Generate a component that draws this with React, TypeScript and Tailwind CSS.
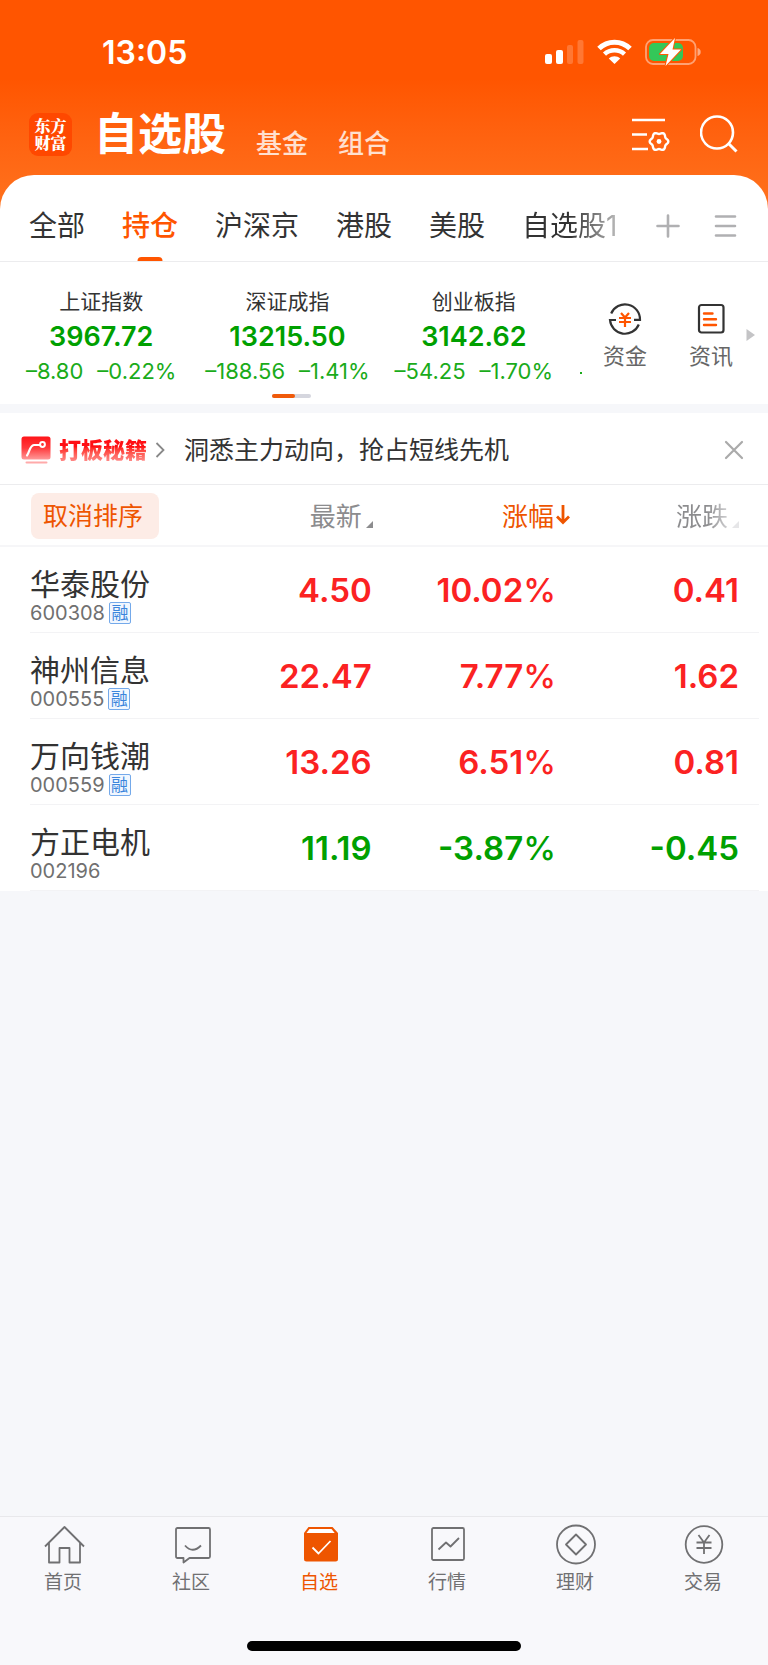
import React from "react";

const tabs = ["全部", "持仓", "沪深京", "港股", "美股"];

const indices = [
  { name: "上证指数", value: "3967.72", change: "–8.80", rate: "–0.22%" },
  { name: "深证成指", value: "13215.50", change: "–188.56", rate: "–1.41%" },
  { name: "创业板指", value: "3142.62", change: "–54.25", rate: "–1.70%" },
];

const stocks = [
  { name: "华泰股份", code: "600308", margin: true, price: "4.50", rate: "10.02", change: "0.41" },
  { name: "神州信息", code: "000555", margin: true, price: "22.47", rate: "7.77", change: "1.62" },
  { name: "万向钱潮", code: "000559", margin: true, price: "13.26", rate: "6.51", change: "0.81" },
  { name: "方正电机", code: "002196", margin: false, price: "11.19", rate: "-3.87", change: "-0.45" },
];

// six-lobed gear outline for the list settings icon
const gear = Array.from({ length: 72 }, (_, i) => {
  const a = (i * Math.PI) / 36;
  const r = 8.4 + 0.9 * Math.cos(6 * a);
  return `${(27 + r * Math.cos(a)).toFixed(2)},${(26.5 + r * Math.sin(a)).toFixed(2)}`;
}).join(" ");

const StatusBar = () => (
  <div className="flex h-[104px] items-center justify-between pl-[102px] pr-[67px]">
    <span className="pt-[2px] text-[32px] leading-8 font-semibold">13:05</span>
    <div className="flex items-center gap-[13px]">
      <svg width="39" height="26" viewBox="0 0 39 26" fill="#fff">
        <rect x="0" y="15" width="7" height="10" rx="2" />
        <rect x="11" y="11" width="7" height="14" rx="2" />
        <rect x="22" y="6" width="6" height="19" rx="2" opacity=".2" />
        <rect x="32.500" y="1" width="6" height="24" rx="2" opacity=".2" />
      </svg>
      <svg width="35" height="26" viewBox="0 0 35 26" fill="none" stroke="#fff">
        <path d="M2 9.500C10.500 1 24.500 1 33 9.500" strokeWidth="5" />
        <path d="M7.500 15.200C13 10 22 10 27.500 15.200" strokeWidth="4.500" />
        <path d="M11.800 19.500C15 16.600 20 16.600 23.200 19.500L17.500 25Z" fill="#fff" stroke="none" />
      </svg>
      <svg width="56" height="28" viewBox="0 0 56 28">
        <rect x="1" y="2" width="49.500" height="24" rx="7" fill="none" stroke="#fff" strokeOpacity=".45" strokeWidth="1.800" />
        <path d="M52.500 10v8c2-.5 3.200-2 3.200-4s-1.200-3.500-3.200-4z" fill="#fff" fillOpacity=".5" />
        <rect x="4" y="5" width="34" height="18" rx="5" fill="#34c759" />
        <path
          d="M30 0 15 16h8.500L20.500 28 36 11.500h-8.500z"
          fill="#fff"
          stroke="#ff5a03"
          strokeWidth="2"
          paintOrder="stroke"
          strokeLinejoin="round"
        />
      </svg>
    </div>
  </div>
);

const Header = () => (
  <header className="flex h-[60px] items-center justify-between pl-[29px] pr-[30px]">
    <div className="flex items-center">
      <div className="mr-[22px] flex size-[43px] items-center justify-center rounded-[9px] bg-[#ff4800] font-['Noto_Serif_CJK_SC','Noto_Sans_CJK_SC',serif] text-[16px] leading-[17px] font-black">
        <span className="w-8 break-all">东方财富</span>
      </div>
      <nav className="flex items-end">
        <a href="#watch" className="text-[44px] leading-[60px] font-bold">
          自选股
        </a>
        <a href="#fund" className="mb-[2px] ml-[30px] text-[26px] leading-9 font-medium text-white/80">
          基金
        </a>
        <a href="#group" className="mb-[2px] ml-[30px] text-[26px] leading-9 font-medium text-white/80">
          组合
        </a>
      </nav>
    </div>
    <div className="flex items-center gap-[30px]">
      <button aria-label="列表设置">
        <svg width="38" height="38" viewBox="0 0 38 38" fill="none" stroke="#fff" strokeWidth="2.600">
          <path d="M0 5h33M0 19.500h15M0 34h16" />
          <polygon points={gear} strokeLinejoin="round" strokeWidth="2.400" />
          <circle cx="27" cy="26.500" r="2.400" fill="#fff" stroke="none" />
        </svg>
      </button>
      <button aria-label="搜索">
        <svg width="38" height="38" viewBox="0 0 38 38" fill="none" stroke="#fff" strokeWidth="2.600">
          <circle cx="17" cy="17.500" r="16" />
          <path d="m28.500 28.500 8 8" strokeWidth="3" />
        </svg>
      </button>
    </div>
  </header>
);

const Tabs = () => (
  <div className="flex h-[87px] items-center justify-between border-b border-[#ececee] pr-[31px] pl-[29px]">
    <div className="flex h-full gap-[37px] text-[28px] leading-10 text-[#333]">
      {tabs.map((tab) =>
        tab === "持仓" ? (
          <button key={tab} className="relative h-full pt-4 font-medium text-[#ff5500]">
            {tab}
            <span className="absolute bottom-0 left-1/2 h-1 w-[25px] -translate-x-1/2 rounded-t-sm bg-[#ff5500]" />
          </button>
        ) : (
          <button key={tab} className="h-full pt-4">
            {tab}
          </button>
        )
      )}
      <button className="h-full bg-linear-to-r from-[#333] from-50% to-[#bbb] bg-clip-text pt-4 text-transparent">
        自选股1
      </button>
    </div>
    <div className="flex items-center gap-[34px] pt-4">
      <button aria-label="添加分组">
        <svg width="24" height="24" viewBox="0 0 24 24" stroke="#b0b0b2" strokeWidth="2.600" strokeLinecap="round">
          <path d="M12 1.500v21M1.500 12h21" />
        </svg>
      </button>
      <button aria-label="分组列表">
        <svg width="23" height="24" viewBox="0 0 23 24" stroke="#b0b0b2" strokeWidth="2.600" strokeLinecap="round">
          <path d="M2 2.500h19M2 12h19M2 21.500h19" />
        </svg>
      </button>
    </div>
  </div>
);

const Indices = () => (
  <section className="flex h-[142px] bg-white">
    <div className="flex min-w-0 flex-1 flex-col items-center">
      <div className="flex w-full items-end pt-6 pr-2 pl-2">
        {indices.map((item) => (
          <div key={item.name} className="flex flex-1 flex-col items-center whitespace-nowrap">
            <span className="text-[21px] leading-8 text-[#333]">{item.name}</span>
            <span className="text-[27px] leading-[38px] font-semibold text-[#00a000]">{item.value}</span>
            <span className="flex gap-[14px] text-[22px] leading-[30px] text-[#1aab1a]">
              <span>{item.change}</span>
              <span>{item.rate}</span>
            </span>
          </div>
        ))}
        <span className="mb-3 ml-[13px] size-[2px] bg-[#1aab1a]" />
      </div>
      <div className="mt-2 mr-2 flex h-1 w-[39px] overflow-hidden rounded-full bg-[#d5d6de]">
        <span className="w-[23px] rounded-r-full bg-[#f05a0a]" />
      </div>
    </div>
    <div className="flex gap-4 pt-10 text-[22px] leading-8 text-[#666]">
      <button className="flex w-[70px] flex-col items-center gap-1">
        <svg width="34" height="34" viewBox="0 0 34 34" fill="none" stroke="#333" strokeWidth="2.200">
          <path d="M3.200 11.500A15 15 0 0 1 32 17.800h-6" />
          <path d="M30.800 22.500A15 15 0 0 1 2 18h6" />
          <path d="m13 11 4 4.500 4-4.500M11 16h12M11 20h12M17 15.500V25" stroke="#ff5500" strokeWidth="2.200" />
        </svg>
        资金
      </button>
      <button className="flex w-[70px] flex-col items-center gap-1">
        <svg width="34" height="34" viewBox="0 0 34 34" fill="none" stroke="#333" strokeWidth="2.200">
          <rect x="5" y="3" width="24.500" height="27.500" rx="2.500" />
          <path d="M10 11.500h8.500M10 17.200h12M10 23h12" stroke="#ff5500" strokeWidth="2.400" strokeLinecap="round" />
        </svg>
        资讯
      </button>
    </div>
    <button aria-label="更多" className="mr-[13px] pt-1">
      <svg width="9" height="12" viewBox="0 0 9 12" fill="#c4c4c6">
        <path d="M.5 0v12L9 6z" />
      </svg>
    </button>
  </section>
);

const Banner = () => (
  <section className="flex h-[72px] items-center border-b border-[#ececee] bg-white pr-[24px] pl-[21px] pt-[2px]">
    <svg width="30" height="30" viewBox="0 0 30 30" fill="none">
      <defs>
        <linearGradient id="badge" x1="0" y1="0" x2="0" y2="1">
          <stop offset="0" stopColor="#ff1418" />
          <stop offset=".5" stopColor="#ff3a3c" />
          <stop offset="1" stopColor="#ff9a9a" />
        </linearGradient>
      </defs>
      <rect x=".5" y="1.500" width="29" height="23" rx="2.500" fill="url(#badge)" />
      <path d="M6 20.500C8.500 17.500 8.500 10.500 13 10h6" stroke="#fff" strokeWidth="2.200" strokeLinecap="round" />
      <circle cx="21.500" cy="9.500" r="2.400" stroke="#fff" strokeWidth="2" />
      <path d="M5.500 27.500h20" stroke="#ffaaaa" strokeWidth="2" strokeLinecap="round" />
    </svg>
    <a href="#tips" className="ml-2 flex items-center">
      <span className="bg-linear-to-b from-[#ff0f14] from-40% to-[#ff9090] to-90% bg-clip-text text-[22px] leading-8 font-black text-transparent">
        打板秘籍
      </span>
      <svg className="ml-2" width="10" height="16" viewBox="0 0 10 16" fill="none" stroke="#888" strokeWidth="1.800">
        <path d="m1.500 1 7 7-7 7" />
      </svg>
    </a>
    <p className="ml-[19px] text-[25px] leading-9 text-[#333]">洞悉主力动向，抢占短线先机</p>
    <button aria-label="关闭" className="ml-auto">
      <svg width="20" height="20" viewBox="0 0 20 20" stroke="#aaa" strokeWidth="2.200" strokeLinecap="round">
        <path d="m2 2 16 16M18 2 2 18" />
      </svg>
    </button>
  </section>
);

const Corner = ({ color }: { color: string }) => (
  <svg className="mb-[7px] self-end" width="7" height="7" viewBox="0 0 7 7" fill={color}>
    <path d="M7 0v7H0z" />
  </svg>
);

const StockTable = () => (
  <table className="w-full table-fixed border-collapse bg-white">
    <thead>
      <tr className="h-[61px] border-b-2 border-[#f6f6f8] text-[26px] leading-9 text-[#8c8c8e]">
        <th className="w-[27%] p-0 pt-[2px] pl-[31px] text-left font-normal">
          <button className="block h-[46px] w-32 rounded-lg bg-[#fdece6] pr-1 text-[25px] text-[#ee5500]">取消排序</button>
        </th>
        <th className="w-[24%] p-0 pt-[3px] pr-[19px] font-normal">
          <button className="ml-auto flex gap-1">
            最新
            <Corner color="#8c8c8e" />
          </button>
        </th>
        <th className="w-[24%] p-0 pt-[3px] pr-[6px] font-normal text-[#ee5500]">
          <button className="ml-auto flex gap-[2px]">
            涨幅
            <svg className="mt-[6px]" width="14" height="20" viewBox="0 0 14 20" fill="none" stroke="#ee5500" strokeWidth="2.800">
              <path d="M7 0v17M1 11.500l6 6 6-6" />
            </svg>
          </button>
        </th>
        <th className="p-0 pt-[3px] pr-[29px] font-normal">
          <button className="ml-auto flex gap-1">
            <span className="bg-linear-to-r from-[#8c8c8e] from-60% to-[#d0d0d2] bg-clip-text text-transparent">涨跌</span>
            <Corner color="#e6e6e8" />
          </button>
        </th>
      </tr>
    </thead>
    <tbody>
      {stocks.map((stock) => (
        <tr
          key={stock.code}
          className={`text-right text-[33px] leading-10 font-semibold ${
            stock.change.startsWith("-") ? "text-[#00a000]" : "text-[#fb2222]"
          }`}
        >
          <td className="p-0 text-left font-normal">
            <div className="ml-[30px] h-[86px] border-b border-[#f3f3f5] pt-[19px]">
              <div className="text-[30px] leading-9 text-[#333]">{stock.name}</div>
              <div className="flex items-center gap-1 text-[20px] leading-[22px] text-[#707070]">
                {stock.code}
                {stock.margin && (
                  <span className="flex size-[22px] items-center justify-center rounded-xs border border-[#74a9ea] bg-[#f1f7ff] text-[17px] leading-5 text-[#3b85dc]">
                    融
                  </span>
                )}
              </div>
            </div>
          </td>
          <td className="p-0">
            <div className="h-[86px] border-b border-[#f3f3f5] pt-[23px] pr-5">{stock.price}</div>
          </td>
          <td className="p-0">
            <div className="h-[86px] border-b border-[#f3f3f5] pt-[23px] pr-5">
              {stock.rate}
              <span className="font-medium">%</span>
            </div>
          </td>
          <td className="p-0">
            <div className="mr-[9px] h-[86px] border-b border-[#f3f3f5] pt-[23px] pr-5">{stock.change}</div>
          </td>
        </tr>
      ))}
    </tbody>
  </table>
);

const navItems = [
  {
    label: "首页",
    icon: (
      <path d="M1 21.500 20.500 2 40 21.500M5 18v19.500h10.500V23h10v14.500H36V18" />
    ),
  },
  {
    label: "社区",
    icon: (
      <>
        <path d="M5.500 3h31q1.500 0 1.500 1.500v27q0 1.500-1.500 1.500h-19l-6 4.500V33h-6Q4 33 4 31.500v-27Q4 3 5.500 3z" />
        <path d="M13 20.500q7.500 8.500 16 0" />
      </>
    ),
  },
  {
    label: "自选",
    active: true,
    icon: (
      <>
        <path d="M8.500 2h24L38 8v26q0 2.500-2.500 2.500h-29Q4 36.500 4 34V8z" fill="#ee5500" stroke="none" />
        <path d="M9.500 4h22l3.200 4H6.500z" fill="#fff" stroke="none" />
        <path d="m12.500 22.500 6 6 12-12.500" stroke="#fff" />
      </>
    ),
  },
  {
    label: "行情",
    icon: (
      <>
        <rect x="4" y="3" width="32" height="32" rx="1.500" />
        <path d="m10.500 24.500 7.500-7 4.500 4 8.500-8.500" />
      </>
    ),
  },
  {
    label: "理财",
    icon: (
      <>
        <circle cx="20" cy="19.500" r="19" />
        <path d="M20 9.500 30 19.500 20 29.500 10 19.500z" />
      </>
    ),
  },
  {
    label: "交易",
    icon: (
      <>
        <circle cx="20" cy="19.500" r="18.300" />
        <path d="m14.500 10 5.500 7.500 5.500-7.500M12.500 17.500h15M12.500 23h15M20 17.500V29" />
      </>
    ),
  },
];

const BottomNav = () => (
  <footer className="border-t border-[#e8e8eb] bg-[#f8f8fb] pb-[14px]">
    <nav className="flex pt-2">
      {navItems.map((item) => (
        <a
          key={item.label}
          href={`#${item.label}`}
          className={`flex flex-1 flex-col items-center text-[19px] leading-7 ${
            item.active ? "text-[#ee5500]" : "text-[#707072]"
          }`}
        >
          <svg
            className="mb-1 overflow-visible"
            width="41"
            height="40"
            viewBox="0 0 41 40"
            fill="none"
            stroke="currentColor"
            strokeWidth="1.800"
            strokeLinejoin="round"
          >
            {item.icon}
          </svg>
          <span className="pr-[2px]">{item.label}</span>
        </a>
      ))}
    </nav>
    <div className="mx-auto mt-11 h-[10px] w-[274px] rounded-full bg-black" />
  </footer>
);

const App = () => {
  return (
    <div className="flex min-h-screen flex-col bg-[#f6f7fa] font-['Inter','Noto_Sans_CJK_SC',sans-serif]">
      <div className="bg-linear-to-b from-[#ff5500] from-30% to-[#ff721d] to-80%">
        <div className="pb-[11px] text-white">
          <StatusBar />
          <Header />
        </div>
        <div className="rounded-t-[34px] bg-white">
          <Tabs />
        </div>
      </div>
      <main className="flex-1">
        <Indices />
        <div className="h-[9px]" />
        <Banner />
        <StockTable />
      </main>
      <BottomNav />
    </div>
  );
};

export default App;
